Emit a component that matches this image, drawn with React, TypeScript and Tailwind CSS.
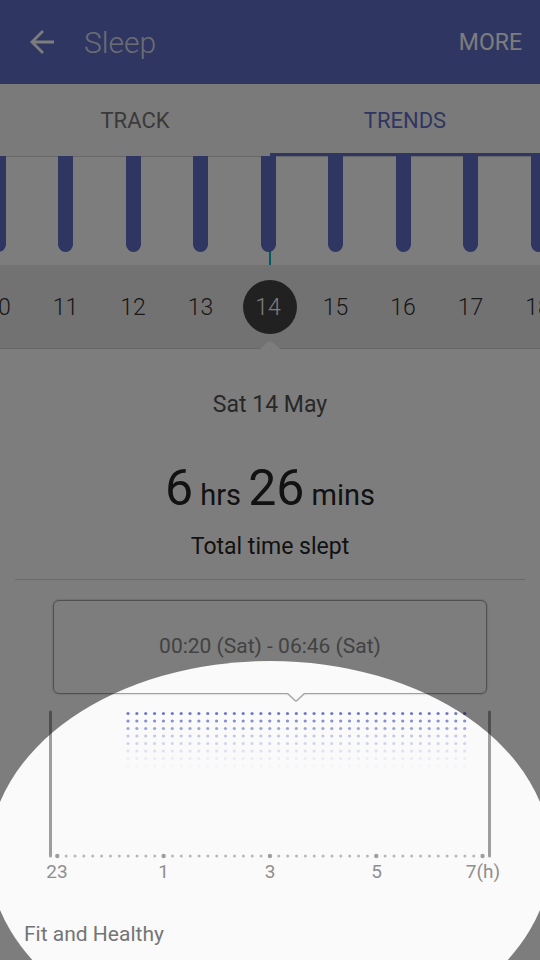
import React from "react";
import clsx from "clsx";

const days = [10, 11, 12, 13, 14, 15, 16, 17, 18];
const selectedDay = 14;

const hours = ["23", "1", "3", "5", "7(h)"];

const dotRows = [0.9, 0.75, 0.6, 0.36, 0.26, 0.16, 0.09, 0.04];
const dotStep = 8.86;

const App = () => {
  return (
    <div className="relative min-h-screen overflow-hidden bg-[#fafafa] font-['Roboto',sans-serif]">
      <Header />
      <Tabs />
      <DayBars />
      <DayPicker />
      <main>
        <Summary />
        <SleepChart />
        <h2 className="mt-[34px] px-6 text-[21px] leading-8 text-[#757575]">
          Fit and Healthy
        </h2>
      </main>
      <Spotlight />
    </div>
  );
};

export default App;

const Header = () => {
  return (
    <header className="flex h-[84px] items-center bg-[#5e6cc2] pt-0.5 pr-[18px] pl-7 text-[#fafafa]">
      <button type="button" aria-label="Back">
        <svg
          className="h-7 w-7"
          viewBox="0 0 28 28"
          fill="none"
          stroke="currentColor"
          strokeWidth="2.8"
        >
          <path d="M15 2 L4 13 L15 24 M4 13 H26" />
        </svg>
      </button>
      <h1 className="ml-7 flex-1 text-3xl font-light text-[#d8dae6]">Sleep</h1>
      <button type="button" className="text-[23px]">
        MORE
      </button>
    </header>
  );
};

const Tabs = () => {
  return (
    <nav className="flex h-[72px] bg-[#f5f5f5] text-[22px]">
      <button type="button" className="flex-1 text-[#757575]">
        TRACK
      </button>
      <button
        type="button"
        className="flex-1 border-b-3 border-[#5e6cc2] pt-[3px] text-[#5e6cc2]"
      >
        TRENDS
      </button>
    </nav>
  );
};

const DayBars = () => {
  return (
    <div className="relative flex h-[109px] justify-center border-t border-[#d0d0d0]">
      <div className="absolute bottom-0 left-1/2 -ml-px h-5 w-0.5 bg-[#00b8c4]" />
      {days.map((day) => (
        <div
          key={day}
          className="relative -mt-px flex w-1/8 shrink-0 justify-center pr-1"
        >
          <div className="h-24 w-[15px] rounded-b-full bg-[#5e6cc2]" />
        </div>
      ))}
    </div>
  );
};

const DayPicker = () => {
  return (
    <div className="relative flex h-[84px] items-center justify-center border-b border-[#cccccc] bg-[#e5e5e5]">
      <div className="absolute left-1/2 h-[54px] w-[54px] -translate-x-1/2 rounded-full bg-[#424242]" />
      {days.map((day) => (
        <button
          key={day}
          type="button"
          className={clsx(
            "relative w-1/8 shrink-0 pt-1 pr-1 text-center text-[23px] font-light",
            day === selectedDay ? "text-[#fafafa]" : "text-[#303030]"
          )}
        >
          {day}
        </button>
      ))}
      <svg
        className="absolute -bottom-px left-1/2 h-2 w-5 -translate-x-1/2"
        viewBox="0 0 20 8"
      >
        <path d="M0 8 L8 1 Q10 -1 12 1 L20 8 Z" fill="#fafafa" />
      </svg>
    </div>
  );
};

const Summary = () => {
  return (
    <section className="mx-[15px] border-b border-[#d4d4d4] pt-10 pb-4 text-center text-[#252525]">
      <p className="text-[23px] leading-8 text-[#505050]">Sat 14 May</p>
      <p className="mt-9 text-[29px] leading-[62px]">
        <span className="text-[50px]">6</span> hrs{" "}
        <span className="text-[50px]">26</span> mins
      </p>
      <p className="mt-[5px] text-[23px] leading-8">Total time slept</p>
    </section>
  );
};

const SleepChart = () => {
  return (
    <section className="pt-5">
      <div className="relative mx-[53px] flex h-[94px] items-center justify-center rounded-md border border-[#a0a0a0] text-[21px] text-[#858585] shadow-[0_0_2px_#a8a8a8]">
        00:20 (Sat) - 06:46 (Sat)
        <svg
          className="absolute top-full left-[56%] h-[10px] w-[18px] -translate-x-1/2"
          viewBox="0 0 18 10"
        >
          <path d="M0 -2 V0 L9 9 L18 0 V-2 Z" fill="#fafafa" />
          <path
            d="M0 0 L8 7.5 Q9 8.5 10 7.5 L18 0"
            fill="none"
            stroke="#a8a8a8"
            strokeWidth="1.5"
          />
        </svg>
      </div>

      <svg className="mx-auto mt-4 w-[444px]" viewBox="0 0 444 150">
        {dotRows.map((opacity, row) =>
          Array.from({ length: 39 }, (_, i) => (
            <circle
              key={`${row}-${i}`}
              cx={80 + i * dotStep}
              cy={3.5 + row * 7.5}
              r="1.6"
              fill="#5e6cc2"
              opacity={opacity}
            />
          ))
        )}
        <path
          d="M2.5 2 V146 M441.5 2 V146"
          stroke="#9e9e9e"
          strokeWidth="3"
          strokeLinecap="round"
        />
        {Array.from({ length: 49 }, (_, i) => (
          <circle
            key={i}
            cx={9.3 + i * dotStep}
            cy="146"
            r={i % 12 === 0 ? 2.2 : 1.5}
            fill={i % 12 === 0 ? "#9e9e9e" : "#b8b8b8"}
          />
        ))}
      </svg>
      <div className="mx-[33px] flex justify-between text-[19px] leading-6 text-[#8f8f8f]">
        {hours.map((hour) => (
          <span key={hour} className="w-12 text-center">
            {hour}
          </span>
        ))}
      </div>
    </section>
  );
};

// dims everything except an oval around the chart
const Spotlight = () => {
  return (
    <div className="pointer-events-none absolute top-[661px] left-1/2 z-20 h-[390px] w-[562px] -translate-x-1/2 rounded-[50%] shadow-[0_0_0_200vmax_rgba(0,0,0,0.5)]" />
  );
};
